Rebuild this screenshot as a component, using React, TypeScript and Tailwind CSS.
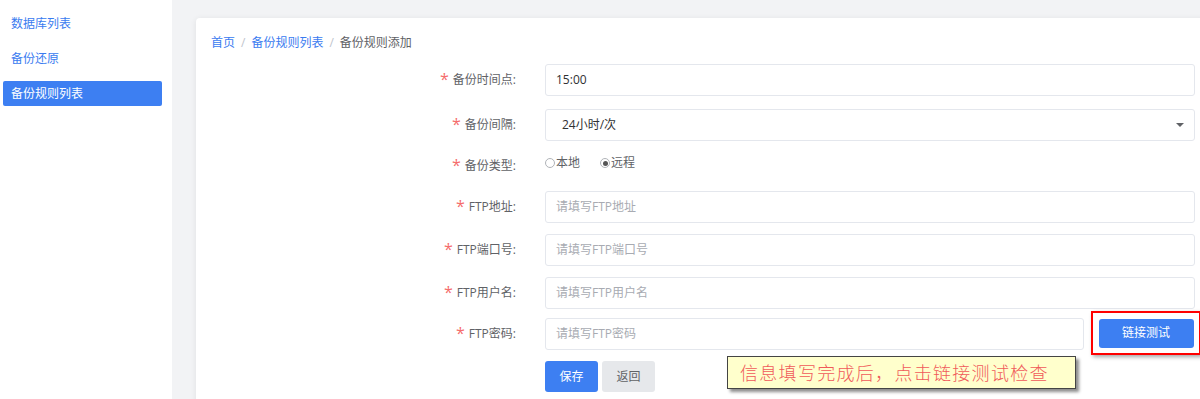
import React from "react";

const font = { fontFamily: '"Open Sans", "Noto Sans CJK SC", sans-serif' };

function Label({ text }: { text: string }) {
  return (
    <div className="w-[349px] shrink-0 pr-[29px] flex justify-end items-center text-[12px] text-[#606266]">
      <span className="text-[#f56c6c] text-[16px] leading-none mr-[4px] relative top-[-1px]">*</span>
      <span>{text}</span>
    </div>
  );
}

function TextInput({ placeholder, value, width = "w-[650px]" }: { placeholder?: string; value?: string; width?: string }) {
  return (
    <div
      className={`${width} h-[32px] border border-[#e4e7ed] rounded-[3px] flex items-center px-[10px] text-[12px] ${
        value ? "text-[#303133]" : "text-[#a8abb2]"
      }`}
    >
      {value ?? placeholder}
    </div>
  );
}

function Radio({ label, checked }: { label: string; checked?: boolean }) {
  return (
    <div className="flex items-center text-[12px] text-[#606266]">
      <span className="w-[10px] h-[10px] rounded-full border border-[#b0b3b8] flex items-center justify-center mr-[1px]">
        {checked ? <span className="w-[5px] h-[5px] rounded-full bg-[#555]" /> : null}
      </span>
      {label}
    </div>
  );
}

export default function App() {
  return (
    <div className="flex w-[1200px] h-[399px] overflow-hidden bg-[#f2f3f5]" style={font}>
      <div className="w-[172px] shrink-0 bg-white pt-[14px] text-[12px]">
        <div className="h-[20px] flex items-center pl-[11px] text-[#3a7bf0]">数据库列表</div>
        <div className="h-[20px] mt-[15px] flex items-center pl-[11px] text-[#3a7bf0]">备份还原</div>
        <div className="h-[25px] mt-[12px] mx-[3px] w-[159px] rounded-[2px] bg-[#3d7ff2] flex items-center pl-[8px] text-white">
          备份规则列表
        </div>
      </div>

      <div className="flex-1 pl-[24px] pt-[18px]">
        <div className="relative w-[1030px] h-[400px] bg-white rounded-[4px] shadow-[0_1px_6px_rgba(0,0,0,0.08)]">
          <div className="pl-[15px] pt-[16px] h-[46px] flex items-start text-[12px]">
            <span className="text-[#3a7bf0]">首页</span>
            <span className="text-[#c0c4cc] mx-[6px]">/</span>
            <span className="text-[#3a7bf0]">备份规则列表</span>
            <span className="text-[#c0c4cc] mx-[6px]">/</span>
            <span className="text-[#606266]">备份规则添加</span>
          </div>

          <div className="flex flex-col">
            <div className="flex h-[32px]">
              <Label text="备份时间点:" />
              <TextInput value="15:00" />
            </div>

            <div className="flex h-[32px] mt-[13px]">
              <Label text="备份间隔:" />
              <div className="w-[650px] h-[32px] border border-[#e4e7ed] rounded-[3px] flex items-center justify-between pl-[16px] pr-[10px] text-[12px] text-[#303133]">
                <span>24小时/次</span>
                <span className="w-0 h-0 border-l-[4px] border-r-[4px] border-t-[4px] border-l-transparent border-r-transparent border-t-[#606266]" />
              </div>
            </div>

            <div className="flex h-[24px] mt-[13px]">
              <Label text="备份类型:" />
              <div className="flex items-start gap-[20px]">
                <Radio label="本地" />
                <Radio label="远程" checked />
              </div>
            </div>

            <div className="flex h-[32px] mt-[13px]">
              <Label text="FTP地址:" />
              <TextInput placeholder="请填写FTP地址" />
            </div>

            <div className="flex h-[32px] mt-[11px]">
              <Label text="FTP端口号:" />
              <TextInput placeholder="请填写FTP端口号" />
            </div>

            <div className="flex h-[32px] mt-[11px]">
              <Label text="FTP用户名:" />
              <TextInput placeholder="请填写FTP用户名" />
            </div>

            <div className="flex h-[32px] mt-[9px]">
              <Label text="FTP密码:" />
              <TextInput placeholder="请填写FTP密码" width="w-[539px]" />
              <div className="ml-[7px] mt-[-7px] w-[110px] h-[44px] border-2 border-[#ff0000] shadow-[2px_2px_4px_rgba(0,0,0,0.35)] flex items-center justify-center">
                <button className="w-[95px] h-[29px] rounded-[3px] bg-[#3d7ff2] text-white text-[12px]">链接测试</button>
              </div>
            </div>

            <div className="flex mt-[11px]">
              <div className="w-[349px] shrink-0" />
              <button className="w-[53px] h-[31px] rounded-[3px] bg-[#3d7ff2] text-white text-[12px]">保存</button>
              <button className="ml-[4px] w-[53px] h-[31px] rounded-[3px] bg-[#e6e8eb] text-[#606266] text-[12px]">返回</button>
            </div>
          </div>

          <div
            className="absolute left-[531px] top-[338px] w-[349px] h-[33px] bg-[#ffffcc] border border-[#444] shadow-[3px_3px_3px_rgba(0,0,0,0.45)] flex items-center pl-[12px] text-[18px] tracking-[1.3px] text-[#f05a5a]"
            style={{ fontFamily: '"Noto Sans CJK SC", serif', fontWeight: 300 }}
          >
            信息填写完成后，点击链接测试检查
          </div>
        </div>
      </div>
    </div>
  );
}
